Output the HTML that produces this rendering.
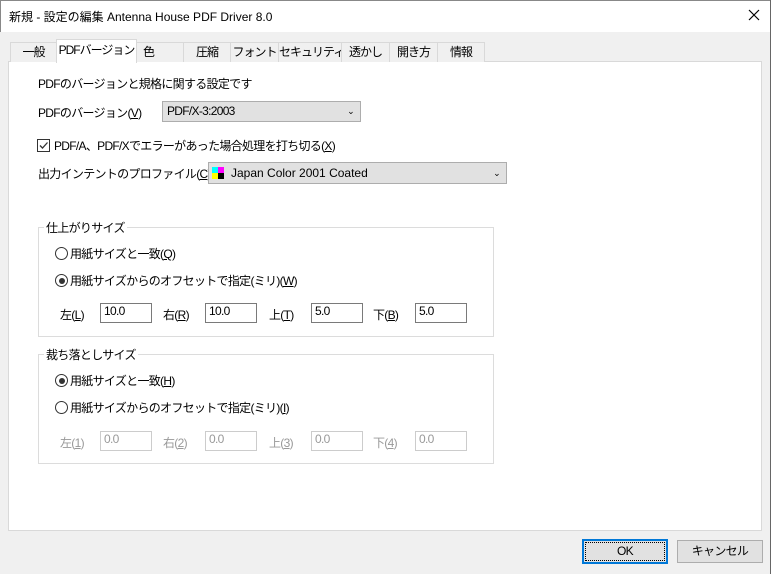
<!DOCTYPE html><html><head><meta charset="utf-8"><style>
body{margin:0;width:771px;height:574px;background:#f0f0f0;font-family:"Liberation Sans","Noto Sans CJK JP",sans-serif;font-size:12px;color:#000;position:relative;overflow:hidden;letter-spacing:-0.7px}
.a{position:absolute;white-space:nowrap}
.title{left:0;top:0;width:769px;height:31px;background:#fff;border:1px solid #888;border-bottom:none}
.tab{position:absolute;top:42px;height:19px;border:1px solid #d9d9d9;border-bottom:none;background:#f0f0f0;text-align:center;line-height:19px;white-space:nowrap;overflow:hidden;letter-spacing:-1px}
.panel{left:8px;top:61px;width:752px;height:468px;background:#fff;border:1px solid #d9d9d9}
.sel{position:absolute;background:#e1e1e1;border:1px solid #adadad;height:19px;line-height:19px;white-space:nowrap}
.grp{position:absolute;border:1px solid #dcdcdc}
.leg{position:absolute;background:#fff;padding:0 2px;white-space:nowrap}
.in{position:absolute;border:1px solid #7a7a7a;line-height:14px;padding-left:3px;box-sizing:border-box;width:52px;height:20px}
.dis{border-color:#ccc;color:#999}
.rad{position:absolute;width:11px;height:11px;border:1px solid #333;border-radius:50%}
.rad.on::after{content:"";position:absolute;left:2.5px;top:2.5px;width:6px;height:6px;border-radius:50%;background:#333}
.btn{position:absolute;top:540px;height:21px;border:1px solid #adadad;background:#e1e1e1;text-align:center;line-height:21px;white-space:nowrap}
u{text-decoration:underline}
</style></head><body>
<div class="a title"></div>
<div class="a" style="left:9px;top:8px;letter-spacing:0">新規 - 設定の編集 Antenna House PDF Driver 8.0</div>
<svg class="a" style="left:748px;top:9px" width="12" height="12"><path d="M1 1L11 11M11 1L1 11" stroke="#000" stroke-width="1.2"/></svg>
<div class="a" style="right:0;top:0;width:1px;height:574px;background:#666"></div>
<div class="a panel"></div>
<div class="tab" style="left:10px;width:45px">一般</div>
<div class="tab" style="left:136px;text-align:left;padding-left:6px;width:40px">色</div>
<div class="tab" style="left:183px;width:46px">圧縮</div>
<div class="tab" style="left:230px;width:47px">フォント</div>
<div class="tab" style="left:278px;width:62px">セキュリティ</div>
<div class="tab" style="left:341px;width:47px">透かし</div>
<div class="tab" style="left:389px;width:47px">開き方</div>
<div class="tab" style="left:437px;width:46px">情報</div>
<div class="tab" style="left:56px;top:39px;height:23px;width:79px;background:#fff;line-height:20px">PDFバージョン</div>
<div class="a" style="left:38px;top:75px">PDFのバージョンと規格に関する設定です</div>
<div class="a" style="left:38px;top:104px">PDFのバージョン(<u>V</u>)</div>
<div class="sel" style="left:162px;top:101px;width:197px"><span style="padding-left:4px">PDF/X-3:2003</span><span style="position:absolute;right:6px;top:0;font-size:9px">&#8964;</span></div>
<div class="a" style="left:37px;top:139px;width:11px;height:11px;border:1px solid #333;background:#fff"><svg width="11" height="11" style="position:absolute;left:0;top:0"><path d="M2 5.5L4.5 8L9.5 2.5" stroke="#333" fill="none" stroke-width="1.3"/></svg></div>
<div class="a" style="left:54px;top:137px">PDF/A、PDF/Xでエラーがあった場合処理を打ち切る(<u>X</u>)</div>
<div class="a" style="left:38px;top:165px">出力インテントのプロファイル(<u>C</u>)</div>
<div class="sel" style="left:208px;top:162px;width:297px;height:20px;line-height:20px"><span style="position:absolute;left:3px;top:4px;width:6px;height:6px;background:#0ff"></span><span style="position:absolute;left:9px;top:4px;width:6px;height:6px;background:#f0f"></span><span style="position:absolute;left:3px;top:10px;width:6px;height:6px;background:#ff0"></span><span style="position:absolute;left:9px;top:10px;width:6px;height:6px;background:#000"></span><span style="padding-left:22px;letter-spacing:0">Japan Color 2001 Coated</span><span style="position:absolute;right:6px;top:0;font-size:9px">&#8964;</span></div>

<div class="grp" style="left:38px;top:227px;width:454px;height:108px"></div>
<div class="leg" style="left:44px;top:219px">仕上がりサイズ</div>
<div class="rad" style="left:55px;top:247px"></div><div class="a" style="left:70px;top:245px">用紙サイズと一致(<u>Q</u>)</div>
<div class="rad on" style="left:55px;top:274px"></div><div class="a" style="left:70px;top:272px">用紙サイズからのオフセットで指定(ミリ)(<u>W</u>)</div>
<div class="a" style="left:60px;top:306px">左(<u>L</u>)</div><div class="in" style="left:100px;top:303px">10.0</div>
<div class="a" style="left:163px;top:306px">右(<u>R</u>)</div><div class="in" style="left:205px;top:303px">10.0</div>
<div class="a" style="left:269px;top:306px">上(<u>T</u>)</div><div class="in" style="left:311px;top:303px">5.0</div>
<div class="a" style="left:373px;top:306px">下(<u>B</u>)</div><div class="in" style="left:415px;top:303px">5.0</div>

<div class="grp" style="left:38px;top:354px;width:454px;height:108px"></div>
<div class="leg" style="left:44px;top:346px">裁ち落としサイズ</div>
<div class="rad on" style="left:55px;top:374px"></div><div class="a" style="left:70px;top:372px">用紙サイズと一致(<u>H</u>)</div>
<div class="rad" style="left:55px;top:401px"></div><div class="a" style="left:70px;top:399px">用紙サイズからのオフセットで指定(ミリ)(<u>I</u>)</div>
<div class="a" style="left:60px;top:434px;color:#999">左(<u>1</u>)</div><div class="in dis" style="left:100px;top:431px">0.0</div>
<div class="a" style="left:163px;top:434px;color:#999">右(<u>2</u>)</div><div class="in dis" style="left:205px;top:431px">0.0</div>
<div class="a" style="left:269px;top:434px;color:#999">上(<u>3</u>)</div><div class="in dis" style="left:311px;top:431px">0.0</div>
<div class="a" style="left:373px;top:434px;color:#999">下(<u>4</u>)</div><div class="in dis" style="left:415px;top:431px">0.0</div>

<div class="btn" style="left:582px;width:82px;border:2px solid #0078d7;top:539px;outline:1px dotted #000;outline-offset:-4px">OK</div>
<div class="btn" style="left:677px;width:84px">キャンセル</div>
</body></html>
